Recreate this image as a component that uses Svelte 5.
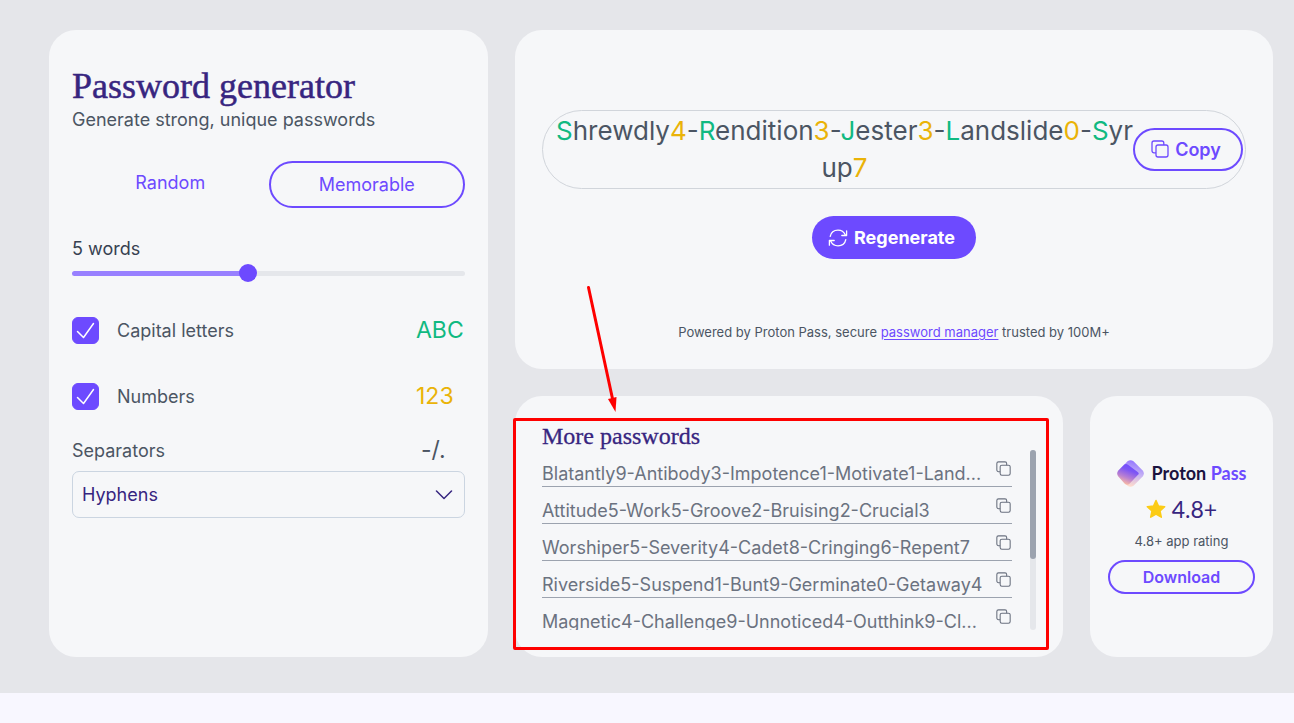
<script>
  let words = $state(5);
  let mode = $state('Memorable');
  let capitals = $state(true);
  let numbers = $state(true);
  let separator = $state('Hyphens');

  const password = 'Shrewdly4-Rendition3-Jester3-Landslide0-Syrup7';
  const chars = password.split('').map((c) => ({
    c,
    kind: /[A-Z]/.test(c) ? 'cap' : /[0-9]/.test(c) ? 'num' : ''
  }));

  const more = [
    'Blatantly9-Antibody3-Impotence1-Motivate1-Land...',
    'Attitude5-Work5-Groove2-Bruising2-Crucial3',
    'Worshiper5-Severity4-Cadet8-Cringing6-Repent7',
    'Riverside5-Suspend1-Bunt9-Germinate0-Getaway4',
    'Magnetic4-Challenge9-Unnoticed4-Outthink9-Cl...'
  ];

  let fill = $derived(((words - 1) / 9) * 100);
</script>

{#snippet copyIcon(size)}
  <svg width={size} height={size} viewBox="0 0 18 18" fill="none" stroke="currentColor" stroke-width="1.3" aria-hidden="true">
    <rect x="5" y="5" width="12" height="12" rx="2" />
    <path d="M5 12.8H3a2 2 0 0 1-2-2V3a2 2 0 0 1 2-2h7.8a2 2 0 0 1 2 2v2" />
  </svg>
{/snippet}

<main>
  <section class="card settings">
    <h1>Password generator</h1>
    <p class="sub">Generate strong, unique passwords</p>
    <div class="tabs">
      {#each ['Random', 'Memorable'] as name}
        <button type="button" class:active={mode === name} onclick={() => (mode = name)}>{name}</button>
      {/each}
    </div>
    <label class="words" for="words">{words} words</label>
    <input id="words" type="range" min="1" max="10" bind:value={words} style="--fill: {fill}%" />
    <div class="option">
      <span class="check">
        <input id="caps" type="checkbox" bind:checked={capitals} />
        <svg width="27" height="27" viewBox="0 0 27 27" fill="none" stroke="#fff" stroke-width="1.5" stroke-linecap="round" stroke-linejoin="round" aria-hidden="true"><path d="M5.5 14.5 11.5 20.5 21.5 6.5" /></svg>
      </span>
      <label for="caps">Capital letters</label>
      <span class="sample cap">ABC</span>
    </div>
    <div class="option second">
      <span class="check">
        <input id="nums" type="checkbox" bind:checked={numbers} />
        <svg width="27" height="27" viewBox="0 0 27 27" fill="none" stroke="#fff" stroke-width="1.5" stroke-linecap="round" stroke-linejoin="round" aria-hidden="true"><path d="M5.5 14.5 11.5 20.5 21.5 6.5" /></svg>
      </span>
      <label for="nums">Numbers</label>
      <span class="sample num">123</span>
    </div>
    <div class="option third">
      <label for="sep">Separators</label>
      <span class="sample marks">-/.</span>
    </div>
    <div class="select">
      <select id="sep" bind:value={separator}>
        <option>Hyphens</option>
        <option>Periods</option>
        <option>Commas</option>
      </select>
      <svg width="18" height="10" viewBox="0 0 18 10" fill="none" stroke="#372580" stroke-width="1.5" stroke-linecap="round" stroke-linejoin="round" aria-hidden="true"><path d="M1.5 1 9 8.5 16.5 1" /></svg>
    </div>
  </section>

  <div class="side">
    <section class="card result">
      <div class="field">
        <output>{#each chars as { c, kind }}<span class={kind}>{c}</span>{/each}</output>
        <button type="button" class="copy">{@render copyIcon(18)}Copy</button>
      </div>
      <button type="button" class="regen">
        <svg width="20" height="20" viewBox="0 0 20 20" fill="none" stroke="currentColor" stroke-width="1.3" stroke-linecap="round" stroke-linejoin="round" aria-hidden="true">
          <path d="M2.2 8.4C3 4.600 6 2.200 10 2.200c3.300 0 6 1.800 7.400 4.800M18.600 2.800v4.700h-4.800" />
          <path d="M17.800 11.600c-.8 3.800-3.800 6.200-7.800 6.200-3.300 0-6-1.800-7.400-4.800M1.400 17.200v-4.700h4.800" />
        </svg>
        Regenerate
      </button>
      <p>Powered by Proton Pass, secure <a href="#manager">password manager</a> trusted by 100M+</p>
    </section>

    <div class="row">
      <section class="card more">
        <h2>More passwords</h2>
        <div class="scroller">
          <ul>
            {#each more as item}
              <li>
                <span>{item}</span>
                <button type="button" aria-label="Copy">{@render copyIcon(15)}</button>
              </li>
            {/each}
          </ul>
          <div class="bar"><div class="thumb"></div></div>
        </div>
        <div class="frame"></div>
        <svg class="arrow" width="40" height="130" viewBox="0 0 40 130" aria-hidden="true">
          <path d="M5.500 4.500 30 118" stroke="#fe0000" stroke-width="3" stroke-linecap="round" fill="none" />
          <path d="M25 116 33.500 114 32.500 129z" fill="#fe0000" />
        </svg>
      </section>

      <section class="card app">
        <div class="brand">
          <svg width="27" height="27" viewBox="0 0 27 27" aria-hidden="true">
            <defs>
              <linearGradient id="back" x1="0.6" y1="0" x2="0.4" y2="1">
                <stop offset="0" stop-color="#8f70ff" />
                <stop offset="0.5" stop-color="#c5b2f5" />
                <stop offset="1" stop-color="#ffdccb" />
              </linearGradient>
              <linearGradient id="front" gradientUnits="userSpaceOnUse" x1="14" y1="4" x2="6" y2="24">
                <stop offset="0" stop-color="#6d4aff" />
                <stop offset="0.3" stop-color="#7d55f5" />
                <stop offset="0.65" stop-color="#b87fd2" />
                <stop offset="1" stop-color="#ffc0a0" />
              </linearGradient>
            </defs>
            <path d="M10.500 1.300Q13.500-1 16.500 1.300L25.700 10.500Q28 13.500 25.700 16.500L16.500 25.700Q13.500 28 10.500 25.700L7 22V5z" fill="url(#back)" />
            <path d="M7 4.800Q9 3 11 4.800L21 12.200Q22.500 13.500 21 14.800L12.500 23.800Q10 26 7.500 23.500L1.300 16.500Q-1 13.500 1.300 10.500z" fill="url(#front)" />
          </svg>
          <strong>Proton <em>Pass</em></strong>
        </div>
        <div class="rating">
          <svg width="20" height="20" viewBox="0 0 20 20" aria-hidden="true"><path d="M10 1.500 12.500 7 18.700 7.700 14 11.900 15.300 18.200 10 15.100 4.700 18.200 6 11.900 1.300 7.700 7.500 7z" fill="#fccc16" stroke="#fccc16" stroke-width="1.500" stroke-linejoin="round" /></svg>
          4.8+
        </div>
        <small>4.8+ app rating</small>
        <a class="download" href="#download">Download</a>
      </section>
    </div>
  </div>
</main>

<style>
  :global(body) {
    margin: 0;
    background: #f8f7ff;
  }
  main {
    display: grid;
    grid-template-columns: 439fr 758fr;
    gap: 27px;
    padding: 30px 21px 36px 49px;
    background: #e5e6ea;
    font-family: Inter, sans-serif;
    font-size: 18px;
    line-height: 27px;
    color: #4b5563;
  }
  h1, h2, p, ul { margin: 0; padding: 0; }
  button, select, input { font: inherit; margin: 0; box-sizing: border-box; }
  button { cursor: pointer; background: none; border: 0; padding: 0; color: inherit; }
  svg { display: block; flex: none; }
  .card {
    box-sizing: border-box;
    background: #f6f7f9;
    border-radius: 27px;
  }
  .settings { padding: 36px 23px; display: flex; flex-direction: column; }
  h1, h2 {
    font-family: "Liberation Serif", serif;
    font-weight: 400;
    color: #372580;
  }
  h1 { font-size: 36px; line-height: 40px; -webkit-text-stroke: 0.5px #372580; }
  .tabs { display: grid; grid-template-columns: 1fr 1fr; margin-top: 28px; }
  .tabs button { height: 43px; color: #6d4aff; border-radius: 24px; }
  .tabs .active { height: 47px; border: 2px solid #6d4aff; }
  .words { margin-top: 27px; color: #374151; }
  input[type='range'] {
    appearance: none;
    width: 100%;
    height: 18px;
    margin-top: 2px;
    background: none;
  }
  input[type='range']::-webkit-slider-runnable-track {
    height: 5px;
    border-radius: 3px;
    background: linear-gradient(to right, #9880ff var(--fill), #e5e7eb var(--fill));
  }
  input[type='range']::-webkit-slider-thumb {
    appearance: none;
    width: 18px;
    height: 18px;
    margin-top: -7px;
    border-radius: 50%;
    background: #6d4aff;
  }
  .option { display: flex; align-items: center; height: 27px; margin-top: 35px; }
  .option.second { margin-top: 39px; }
  .option.third { margin-top: 27px; }
  .check { display: grid; margin-right: 18px; }
  .check > * { grid-area: 1 / 1; }
  .check svg { pointer-events: none; }
  .check input {
    appearance: none;
    width: 27px;
    height: 27px;
    border-radius: 6px;
    border: 1px solid #6d4aff;
  }
  .check input:checked { background: #6d4aff; }
  .sample { margin-left: auto; width: 49px; font-size: 23px; }
  .marks { width: 44px; }
  .cap { color: #10b981; }
  .num { color: #eab308; }
  .select { display: grid; align-items: center; margin-top: 7px; }
  .select > * { grid-area: 1 / 1; }
  .select svg { justify-self: end; margin-right: 12px; pointer-events: none; }
  select {
    appearance: none;
    height: 47px;
    padding: 0 9px;
    border: 1px solid #cbd5e1;
    border-radius: 7px;
    background: none;
    color: #372580;
  }
  .side { display: flex; flex-direction: column; gap: 27px; min-width: 0; }
  .result {
    display: flex;
    flex-direction: column;
    align-items: center;
    padding: 80px 27px 27px;
  }
  .field {
    display: flex;
    align-items: center;
    align-self: stretch;
    padding: 1px 2px 2px 13px;
    border: 1px solid #d1d5db;
    border-radius: 40px;
  }
  output {
    flex: 1;
    min-width: 0;
    font-size: 26px;
    line-height: 37px;
    text-align: center;
    word-break: break-all;
  }
  .copy {
    display: flex;
    align-items: center;
    justify-content: center;
    gap: 6px;
    width: 110px;
    height: 43px;
    padding-right: 4px;
    border: 2px solid #6d4aff;
    border-radius: 22px;
    color: #6d4aff;
    font-weight: 600;
  }
  .regen {
    display: flex;
    align-items: center;
    gap: 6px;
    height: 43px;
    margin-top: 27px;
    padding: 0 21px 0 16px;
    border-radius: 22px;
    background: #6d4aff;
    color: #fff;
    font-weight: 700;
  }
  .result p { margin-top: 63px; font-size: 13px; line-height: 20px; }
  .result a { color: #6d4aff; text-underline-offset: 2px; }
  .row { display: grid; grid-template-columns: 548fr 183fr; gap: 27px; }
  .more { position: relative; padding: 27px; }
  h2 { font-size: 24px; line-height: 27px; -webkit-text-stroke: 0.3px #372580; }
  .scroller { display: flex; justify-content: space-between; gap: 18px; height: 180px; overflow: hidden; }
  ul { flex: 1; min-width: 0; list-style: none; }
  li {
    display: flex;
    align-items: flex-start;
    box-sizing: border-box;
    height: 37px;
    padding-right: 1px;
    border-bottom: 1px solid #9ca3af;
    color: #6b7280;
  }
  li span { flex: 1; padding-top: 10px; white-space: nowrap; }
  li button { margin-top: 11px; }
  .bar { width: 6px; border-radius: 3px; background: #e5e7eb; }
  .thumb { height: 109px; border-radius: 3px; background: #9ca3af; }
  .frame {
    position: absolute;
    inset: 22px 14px 7px -2px;
    border: 3px solid #fe0000;
    border-radius: 2px;
    pointer-events: none;
  }
  .arrow { position: absolute; left: 68px; top: -113px; pointer-events: none; }
  .app {
    display: flex;
    flex-direction: column;
    align-items: center;
    justify-content: center;
    padding: 0 18px;
  }
  .brand { display: flex; align-items: center; gap: 8px; }
  .brand strong { font-family: Lato, sans-serif; font-size: 18px; font-weight: 700; color: #1b1340; }
  em { font-style: normal; color: #6d4aff; }
  .rating {
    display: flex;
    align-items: center;
    gap: 6px;
    margin-top: 7px;
    font-family: Lato, sans-serif;
    font-size: 23px;
    line-height: 30px;
    color: #372580;
  }
  small { margin-top: 7px; font-size: 13px; line-height: 20px; }
  .download {
    align-self: stretch;
    margin-top: 9px;
    border: 2px solid #6d4aff;
    border-radius: 17px;
    font-size: 16px;
    line-height: 30px;
    font-weight: 600;
    text-align: center;
    text-decoration: none;
    color: #6d4aff;
  }
</style>
